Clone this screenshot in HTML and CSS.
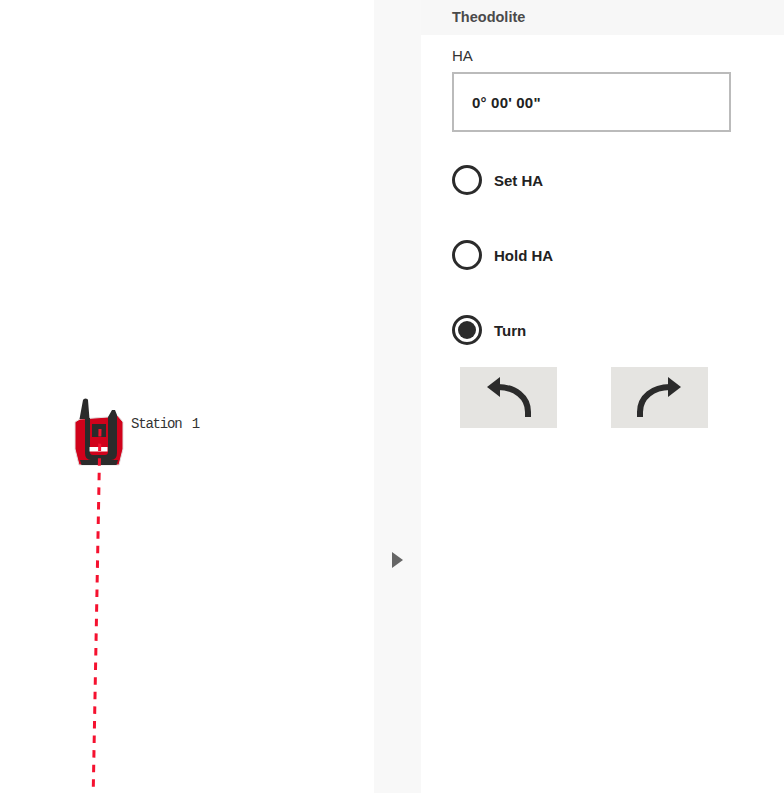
FILE: index.html
```html
<!DOCTYPE html>
<html lang="en">
<head>
  <meta charset="UTF-8">
  <meta name="viewport" content="width=device-width, initial-scale=1.0">
  <link rel="stylesheet" href="styles.css">
  <title>Theodolite</title>
</head>
<body>

  <div id="app-container">
    <div id="map-canvas">
      <svg class="map-drawing" width="374" height="793" viewBox="0 0 374 793">
        <!-- station icon -->
        <path d="M75 422 L80 419 L108 417 L117 415 L123 422 L123 449 L119 465 L79 465 L75 449 Z" fill="#d0021b" stroke="#e2e2e2" stroke-width="1"/>
        <path d="M79.5 419 L83 400 Q83.5 398.5 85.5 398.5 Q88 398.5 88 400 L89.5 419 Z" fill="#2b2b2b"/>
        <path d="M85 418 L90 418 L90 452 Q90 455 93 455 L105 455 Q108 455 108 452 L108 417 L112 410 L115 410 L117 415 L117 453 Q117 460 111 460 L91 460 Q85 460 85 453 Z" fill="#2b2b2b"/>
        <rect x="92" y="424" width="14" height="13" fill="#2b2b2b"/>
        <rect x="89.5" y="447" width="18" height="4.5" fill="#ffffff"/>
        <path d="M80 460 L118 460 L116.5 465 L81.5 465 Z" fill="#2b2b2b"/>
        <!-- sight line -->
        <line x1="100" y1="429" x2="93.2" y2="793" class="sight-line"/>
        <text x="131" y="427.5" class="station-label" xml:space="preserve">Station  1</text>
      </svg>
    </div>

    <div id="panel-toggle">
      <span class="toggle-arrow"></span>
    </div>

    <div id="side-panel">
      <div class="panel-header">Theodolite</div>

      <div class="panel-body">
        <div class="field-label">HA</div>
        <div class="angle-box">0° 00' 00"</div>

        <div class="radio-row">
          <span class="radio"></span>
          <span class="radio-text">Set HA</span>
        </div>
        <div class="radio-row">
          <span class="radio"></span>
          <span class="radio-text">Hold HA</span>
        </div>
        <div class="radio-row">
          <span class="radio selected"></span>
          <span class="radio-text">Turn</span>
        </div>

        <div class="turn-buttons">
          <div class="turn-button">
            <svg class="turn-icon" width="97" height="61" viewBox="0 0 97 61">
              <path d="M68 50 L68 45 C68 30 55 20 38 20" class="turn-arc"/>
              <path d="M27 20 L40 10 L40 30 Z" class="turn-head"/>
            </svg>
          </div>
          <div class="turn-button">
            <svg class="turn-icon" width="97" height="61" viewBox="0 0 97 61">
              <path d="M29 50 L29 45 C29 30 42 20 59 20" class="turn-arc"/>
              <path d="M70 20 L57 10 L57 30 Z" class="turn-head"/>
            </svg>
          </div>
        </div>
      </div>
    </div>
  </div>

</body>
</html>
```

FILE: styles.css
```css
body {
  font-family: "Liberation Sans", Arial, sans-serif;
  margin: 0;
  padding: 0;
  background-color: #fff;
  overflow: hidden;
}

#app-container {
  display: flex;
  width: 784px;
  height: 793px;
}

#map-canvas {
  width: 374px;
  flex: none;
}

.map-drawing {
  display: block;
}

.sight-line {
  stroke: #f5112f;
  stroke-width: 3;
  stroke-dasharray: 7.5 7.1;
}

.station-label {
  font-family: "Liberation Mono", monospace;
  font-size: 14px;
  letter-spacing: -1.2px;
  word-spacing: -2px;
  fill: #333;
}

#panel-toggle {
  width: 47px;
  flex: none;
  background-color: #f8f8f8;
  display: flex;
  justify-content: center;
  padding-top: 552px;
  box-sizing: border-box;
}

.toggle-arrow {
  width: 0;
  height: 0;
  border-left: 11px solid #666;
  border-top: 8px solid transparent;
  border-bottom: 8px solid transparent;
}

#side-panel {
  flex: 1;
}

.panel-header {
  height: 35px;
  line-height: 34px;
  padding-left: 31px;
  background-color: #f7f7f7;
  color: #4a4a4a;
  font-size: 14.5px;
  font-weight: bold;
}

.panel-body {
  padding: 12px 0 0 31px;
}

.field-label {
  font-size: 15px;
  line-height: 18px;
  color: #333;
  margin-bottom: 7px;
}

.angle-box {
  width: 279px;
  height: 60px;
  box-sizing: border-box;
  border: 2px solid #bbb;
  padding-left: 18px;
  line-height: 57px;
  font-size: 15px;
  font-weight: bold;
  letter-spacing: 0.2px;
  color: #222;
}

.radio-row {
  display: flex;
  align-items: center;
  gap: 12px;
  height: 30px;
  margin-top: 45px;
}

.angle-box + .radio-row {
  margin-top: 33px;
}

.radio {
  width: 30px;
  height: 30px;
  box-sizing: border-box;
  border: 3px solid #2b2b2b;
  border-radius: 50%;
  display: flex;
  align-items: center;
  justify-content: center;
}

.radio.selected::after {
  content: "";
  width: 18px;
  height: 18px;
  border-radius: 50%;
  background-color: #2b2b2b;
}

.radio-text {
  font-size: 15px;
  font-weight: bold;
  color: #222;
}

.turn-buttons {
  display: flex;
  gap: 54px;
  margin: 22px 0 0 8px;
}

.turn-button {
  width: 97px;
  height: 61px;
  background-color: #e5e4e1;
}

.turn-icon {
  display: block;
}

.turn-arc {
  fill: none;
  stroke: #2b2b2b;
  stroke-width: 6;
}

.turn-head {
  fill: #2b2b2b;
}
```
